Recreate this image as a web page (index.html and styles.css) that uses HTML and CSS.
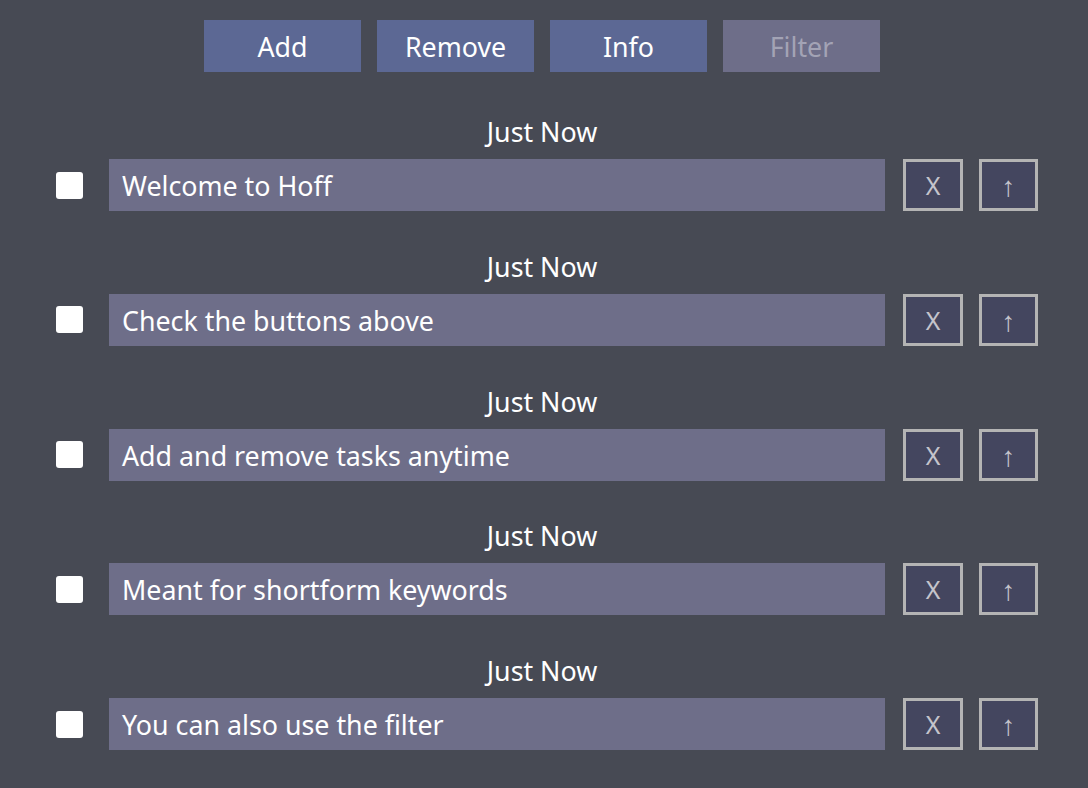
FILE: index.html
```html
<!DOCTYPE html>
<html>
<head>
<meta charset="utf-8">
<link rel="stylesheet" href="styles.css">
</head>
<body>
<div class="app">
  <div class="toolbar">
    <button class="tbtn">Add</button>
    <button class="tbtn">Remove</button>
    <button class="tbtn">Info</button>
    <button class="tbtn disabled">Filter</button>
  </div>
  <div class="list">
    <div class="task">
      <div class="stamp">Just Now</div>
      <div class="row">
        <span class="check"></span>
        <div class="field">Welcome to Hoff</div>
        <button class="sbtn">X</button>
        <button class="sbtn up">↑</button>
      </div>
    </div>
    <div class="task">
      <div class="stamp">Just Now</div>
      <div class="row">
        <span class="check"></span>
        <div class="field">Check the buttons above</div>
        <button class="sbtn">X</button>
        <button class="sbtn up">↑</button>
      </div>
    </div>
    <div class="task">
      <div class="stamp">Just Now</div>
      <div class="row">
        <span class="check"></span>
        <div class="field">Add and remove tasks anytime</div>
        <button class="sbtn">X</button>
        <button class="sbtn up">↑</button>
      </div>
    </div>
    <div class="task">
      <div class="stamp">Just Now</div>
      <div class="row">
        <span class="check"></span>
        <div class="field">Meant for shortform keywords</div>
        <button class="sbtn">X</button>
        <button class="sbtn up">↑</button>
      </div>
    </div>
    <div class="task">
      <div class="stamp">Just Now</div>
      <div class="row">
        <span class="check"></span>
        <div class="field">You can also use the filter</div>
        <button class="sbtn">X</button>
        <button class="sbtn up">↑</button>
      </div>
    </div>
  </div>
</div>
</body>
</html>
```

FILE: styles.css
```css
html, body {
  margin: 0;
  padding: 0;
  background: #474a54;
  height: 100%;
}
body {
  font-family: "Noto Sans", "Open Sans", sans-serif;
  color: #ffffff;
}
.app {
  padding-top: 20px;
}
.toolbar {
  display: flex;
  justify-content: center;
  gap: 16px;
  margin-right: 4px;
}
.tbtn {
  width: 157px;
  height: 52px;
  border: none;
  background: #5c6894;
  color: #ffffff;
  font-family: "Noto Sans", "Open Sans", sans-serif;
  font-size: 26.8px;
  padding: 0;
}
.tbtn.disabled {
  background: #6e6e89;
  color: #a3a3b5;
}
.list {
  margin-top: 42px;
}
.task {
  margin-bottom: 37.75px;
}
.stamp {
  text-align: center;
  font-size: 26.8px;
  line-height: 36px;
  margin-right: 4px;
  margin-bottom: 9px;
}
.row {
  display: flex;
  align-items: center;
  padding-left: 56px;
}
.check {
  width: 27px;
  height: 27px;
  background: #ffffff;
  border-radius: 3px;
  flex: none;
}
.field {
  margin-left: 26px;
  width: 776px;
  height: 52px;
  background: #6e6e89;
  box-sizing: border-box;
  padding-left: 13px;
  font-size: 26.8px;
  line-height: 54px;
  color: #ffffff;
}
.sbtn {
  margin-left: 18px;
  width: 60px;
  height: 52px;
  box-sizing: border-box;
  border: 3px solid #b4b4b4;
  background: #44465f;
  color: #c4c4cc;
  font-family: "Noto Sans", "Open Sans", sans-serif;
  font-size: 25px;
  padding: 0 0 0 0;
}
.sbtn.up {
  margin-left: 16px;
  width: 59px;
  font-size: 28px;
}
```
